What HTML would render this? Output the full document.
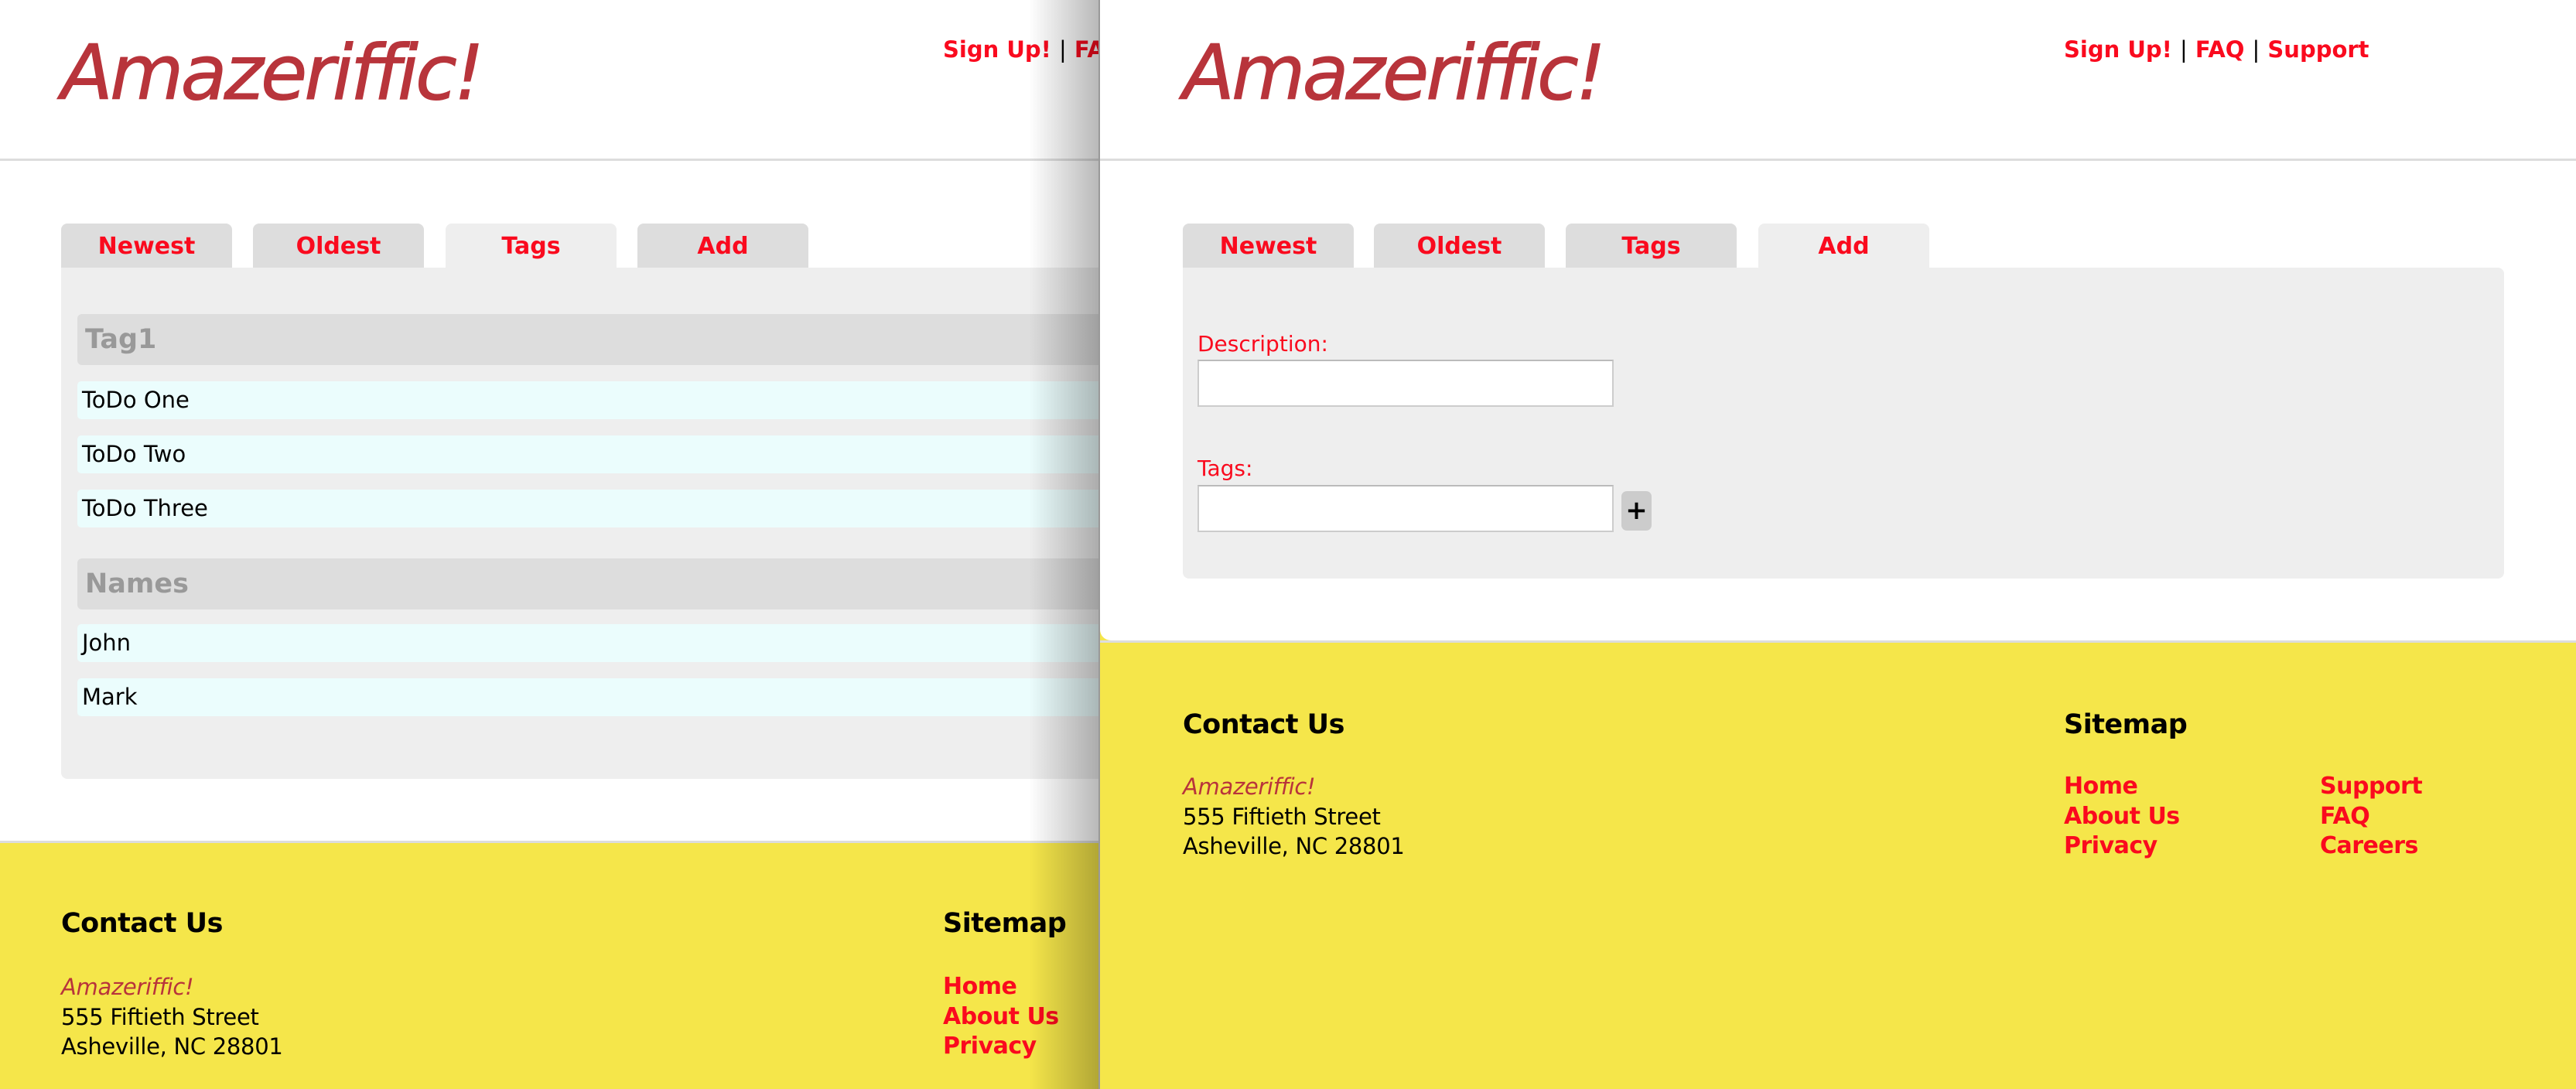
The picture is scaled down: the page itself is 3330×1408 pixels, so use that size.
<!DOCTYPE html>
<html><head><meta charset="utf-8"><style>
*{margin:0;padding:0;box-sizing:border-box}
body{width:3330px;height:1408px;position:relative;overflow:hidden;background:#f5e64a;font-family:"DejaVu Sans","Liberation Sans",sans-serif}
.p{position:absolute;white-space:nowrap}
.red{color:#fa0a1e}
.logo{font-style:italic;color:#b8343b;font-size:98px;letter-spacing:-4px;line-height:1;-webkit-text-stroke:1px #b8343b}
.nav{font-size:29px;font-weight:bold;line-height:40px;color:#fa0a1e}
.nav span{color:#000;font-weight:normal}
.tab{position:absolute;top:289px;height:57px;width:221px;background:#ddd;border-radius:8px 8px 0 0;text-align:center;line-height:60px;font-size:30px;font-weight:bold;color:#fa0a1e}
.tab.a{background:#eee}
.hdr{position:absolute;left:100px;width:1400px;height:66px;background:#ddd;border-radius:6px;color:#999;font-weight:bold;font-size:35px;line-height:66px;padding-left:10px}
.item{position:absolute;left:100px;width:1400px;height:49px;background:#ebfdfd;border-radius:5px;font-size:29px;line-height:49px;padding-left:6px;color:#000}
.fh{font-size:35px;line-height:48px;color:#000;font-weight:bold;letter-spacing:-0.5px}
.ft{font-size:29px;line-height:38px;color:#000;letter-spacing:-0.3px}
.fl{font-size:30px;line-height:38px;font-weight:bold;color:#fa0a1e;letter-spacing:-0.5px}
</style></head><body>
<div style="position:absolute;left:0;top:0;width:1421px;height:1408px;overflow:hidden;background:#f5e64a">
 <div style="position:absolute;left:0;top:0;width:1421px;height:1087px;background:#fff"></div>
 <div style="position:absolute;left:0;top:205px;width:1421px;height:3px;background:#ddd"></div>
 <div class="p logo" style="left:79px;top:46px">Amazeriffic!</div>
 <div class="p nav" style="left:1219px;top:44px">Sign Up! <span>|</span> FAQ</div>
 <div class="tab" style="left:79px">Newest</div>
 <div class="tab" style="left:327px">Oldest</div>
 <div class="tab a" style="left:576px">Tags</div>
 <div class="tab" style="left:824px">Add</div>
 <div style="position:absolute;left:79px;top:346px;width:1500px;height:661px;background:#eee;border-radius:0 0 8px 8px"></div>
 <div class="hdr" style="top:406px">Tag1</div>
 <div class="item" style="top:493px">ToDo One</div>
 <div class="item" style="top:563px">ToDo Two</div>
 <div class="item" style="top:633px">ToDo Three</div>
 <div class="hdr" style="top:722px">Names</div>
 <div class="item" style="top:807px">John</div>
 <div class="item" style="top:877px">Mark</div>
 <div style="position:absolute;left:0;top:1087px;width:1421px;height:3px;background:#ddd"></div>
 <div class="p fh" style="left:79px;top:1170px">Contact Us</div>
 <div class="p ft" style="left:79px;top:1257px;font-style:italic;color:#b8343b">Amazeriffic!</div>
 <div class="p ft" style="left:79px;top:1296px">555 Fiftieth Street</div>
 <div class="p ft" style="left:79px;top:1334px">Asheville, NC 28801</div>
 <div class="p fh" style="left:1219px;top:1170px">Sitemap</div>
 <div class="p fl" style="left:1219px;top:1257px">Home</div>
 <div class="p fl" style="left:1219px;top:1296px">About Us</div>
 <div class="p fl" style="left:1219px;top:1334px">Privacy</div>
 <div style="position:absolute;left:1330px;top:0;width:91px;height:1408px;background:linear-gradient(to right,rgba(0,0,0,0),rgba(0,0,0,0.28))"></div>
</div>
<div style="position:absolute;left:1420px;top:0;width:1910px;height:1408px;background:#f5e64a;border-left:2px solid #999">
 <div style="position:absolute;left:0;top:0;width:1910px;height:828px;background:#fff;border-radius:0 0 0 14px"></div>
 <div style="position:absolute;left:0;top:828px;width:1910px;height:3px;background:#ddd"></div>
 <div style="position:absolute;left:0;top:205px;width:1910px;height:3px;background:#ddd"></div>
 <div class="p logo" style="left:107px;top:46px">Amazeriffic!</div>
 <div class="p nav" style="left:1246px;top:44px">Sign Up! <span>|</span> FAQ <span>|</span> Support</div>
 <div class="tab" style="left:107px">Newest</div>
 <div class="tab" style="left:354px">Oldest</div>
 <div class="tab" style="left:602px">Tags</div>
 <div class="tab a" style="left:851px">Add</div>
 <div style="position:absolute;left:107px;top:346px;width:1708px;height:402px;background:#eee;border-radius:0 8px 8px 8px"></div>
 <div class="p red" style="left:126px;top:426px;font-size:28px;line-height:38px">Description:</div>
 <div style="position:absolute;left:126px;top:465px;width:538px;height:61px;background:#fff;border:2px solid #ccc;border-top-color:#bbb"></div>
 <div class="p red" style="left:126px;top:587px;font-size:28px;line-height:38px">Tags:</div>
 <div style="position:absolute;left:126px;top:627px;width:538px;height:61px;background:#fff;border:2px solid #ccc;border-top-color:#bbb"></div>
 <div style="position:absolute;left:674px;top:635px;width:39px;height:51px;background:#ccc;border-radius:7px;text-align:center;font-size:34px;font-weight:bold;line-height:51px">+</div>
 <div class="p fh" style="left:107px;top:913px">Contact Us</div>
 <div class="p ft" style="left:107px;top:998px;font-style:italic;color:#b8343b">Amazeriffic!</div>
 <div class="p ft" style="left:107px;top:1037px">555 Fiftieth Street</div>
 <div class="p ft" style="left:107px;top:1075px">Asheville, NC 28801</div>
 <div class="p fh" style="left:1246px;top:913px">Sitemap</div>
 <div class="p fl" style="left:1246px;top:998px">Home</div>
 <div class="p fl" style="left:1246px;top:1037px">About Us</div>
 <div class="p fl" style="left:1246px;top:1075px">Privacy</div>
 <div class="p fl" style="left:1577px;top:998px">Support</div>
 <div class="p fl" style="left:1577px;top:1037px">FAQ</div>
 <div class="p fl" style="left:1577px;top:1075px">Careers</div>
</div>
</body></html>
